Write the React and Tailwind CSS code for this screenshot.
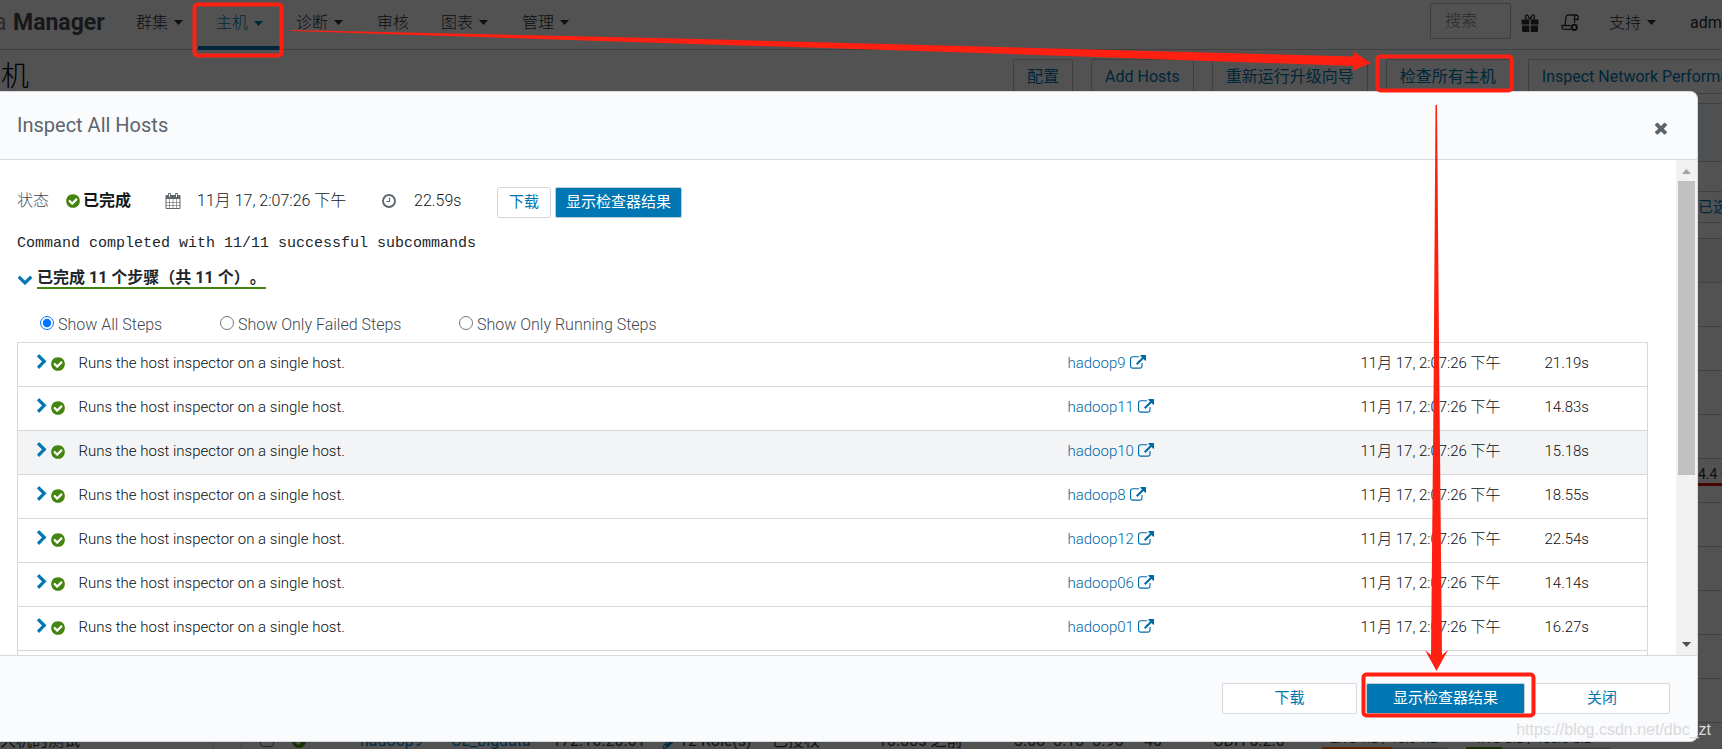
import React from "react";
import { FaPencilAlt } from "react-icons/fa";

const baseFont = "font-['Roboto','Noto_Sans_CJK_SC',sans-serif]";

function Caret({ className = "" }) {
  return (
    <svg className={`h-[5px] w-[9px] ${className}`} viewBox="0 0 8 4" fill="currentColor" preserveAspectRatio="none" aria-hidden="true">
      <path d="M0 0h8L4 4z" />
    </svg>
  );
}

function Glyph({ d, className }) {
  return (
    <svg className={className} viewBox="0 0 1792 1792" fill="currentColor" aria-hidden="true">
      <path d={d} />
    </svg>
  );
}

const glyphs = {
  external:
    "M1408 928v320q0 119-84.500 203.500t-203.500 84.500h-832q-119 0-203.500-84.500t-84.500-203.500v-832q0-119 84.500-203.500t203.500-84.500h704q14 0 23 9t9 23v64q0 14-9 23t-23 9h-704q-66 0-113 47t-47 113v832q0 66 47 113t113 47h832q66 0 113-47t47-113v-320q0-14 9-23t23-9h64q14 0 23 9t9 23zm384-864v512q0 26-19 45t-45 19-45-19l-176-176-652 652q-10 10-23 10t-23-10l-114-114q-10-10-10-23t10-23l652-652-176-176q-19-19-19-45t19-45 45-19h512q26 0 45 19t19 45z",
  right:
    "M1363 877l-742 742q-19 19-45 19t-45-19l-166-166q-19-19-19-45t19-45l531-531-531-531q-19-19-19-45t19-45l166-166q19-19 45-19t45 19l742 742q19 19 19 45t-19 45z",
  down:
    "M1683 808l-742 741q-19 19-45 19t-45-19l-742-741q-19-19-19-45.500t19-45.500l166-165q19-19 45-19t45 19l531 531 531-531q19-19 45-19t45 19l166 165q19 19 19 45.500t-19 45.500z",
  check:
    "M1412 734q0-28-18-46l-91-90q-19-19-45-19t-45 19l-408 407-226-226q-19-19-45-19t-45 19l-91 90q-18 18-18 46 0 27 18 45l362 362q19 19 45 19 27 0 46-19l543-543q18-18 18-45zm252 162q0 209-103 385.500t-279.500 279.500-385.500 103-385.500-103-279.500-279.500-103-385.500 103-385.500 279.500-279.500 385.500-103 385.500 103 279.500 279.500 103 385.500z",
  times:
    "M1490 1322q0 40-28 68l-136 136q-28 28-68 28t-68-28l-294-294-294 294q-28 28-68 28t-68-28l-136-136q-28-28-28-68t28-68l294-294-294-294q-28-28-28-68t28-68l136-136q28-28 68-28t68 28l294 294 294-294q28-28 68-28t68 28l136 136q28 28 28 68t-28 68l-294 294 294 294q28 28 28 68z",
};

function CheckIcon({ className = "" }) {
  return <Glyph d={glyphs.check} className={`h-4 w-4 shrink-0 ${className}`} />;
}

function GiftIcon() {
  return (
    <svg className="h-[18px] w-[18px]" viewBox="0 0 18 18" aria-hidden="true">
      <path fill="currentColor" d="M1 5.500h7.300v5H.5V6zM9.700 5.500H17l.5.500v4.500H9.700zM1 11.500h7.300V18H2l-1-1zM9.700 11.500H17V17l-1 1H9.700z" />
      <path fill="none" stroke="currentColor" strokeWidth="1.300" d="M8.600 5.500C8 2.500 6.500.7 5.300 1 3.700 1.500 4.500 4.500 6 5.500M9.400 5.500C10 2.500 11.500.7 12.700 1c1.600.5.8 3.500-.7 4.500" />
    </svg>
  );
}

function ScriptIcon() {
  return (
    <svg className="h-[18px] w-[18px]" viewBox="0 0 18 18" fill="none" stroke="currentColor" strokeWidth="1.300" aria-hidden="true">
      <path d="M4 11.500L5 3a2.300 2.300 0 0 1 2.300-2H15.500A1.700 1.700 0 0 1 17 3v2.500h-3.500M15.500 1A2.300 2.300 0 0 0 13.500 3v6M9.500 11.500H1v2A1.800 1.800 0 0 0 2.700 15.300H10" />
      <circle cx="13.300" cy="13.300" r="2.600" strokeWidth="2" />
    </svg>
  );
}

function CalendarIcon() {
  return (
    <svg className="h-4 w-4" viewBox="0 0 16 16" fill="none" stroke="currentColor" aria-hidden="true">
      <path d="M1 2.500h14v13H1z" />
      <path d="M1 2.500h14V6H1z" fill="currentColor" stroke="none" />
      <path d="M1 9.500h14M1 12.500h14M4.500 6v9M8 6v9M11.500 6v9" strokeWidth=".6" />
      <path d="M4.500 0v4M11.500 0v4" strokeWidth="2.600" />
      <path d="M4.500 1v3M11.500 1v3" stroke="#fff" strokeWidth=".9" />
    </svg>
  );
}

function ClockIcon() {
  return (
    <svg className="h-[14px] w-[14px]" viewBox="0 0 14 14" fill="none" stroke="currentColor" aria-hidden="true">
      <circle cx="7" cy="7" r="6" strokeWidth="1.900" />
      <path d="M7.500 3.500v4h-3" strokeWidth="1.200" />
    </svg>
  );
}

const navItems = [
  { label: "群集", caret: true },
  { label: "主机", caret: true, active: true },
  { label: "诊断", caret: true },
  { label: "审核" },
  { label: "图表", caret: true },
  { label: "管理", caret: true },
];

const actions = ["配置", "Add Hosts", "重新运行升级向导", "检查所有主机", "Inspect Network Performance"];

const steps = [
  ["hadoop9", "21.19s"],
  ["hadoop11", "14.83s"],
  ["hadoop10", "15.18s"],
  ["hadoop8", "18.55s"],
  ["hadoop12", "22.54s"],
  ["hadoop06", "14.14s"],
  ["hadoop01", "16.27s"],
  ["hadoop7", "15.02s"],
];

function TopBar() {
  return (
    <header className="flex h-[50px] shrink-0 items-stretch border-b border-[#c8c8c8] text-[#2a3036]">
      <div className="flex w-[120px] shrink-0 items-center pb-[2px] text-[23px] whitespace-nowrap">
        <span className="ml-[-6px] w-[19px] text-[#888]">a</span>
        <b className="font-bold text-[#444c52]">Manager</b>
      </div>
      <nav className="flex flex-1 font-light">
        {navItems.map((n) => (
          <a
            key={n.label}
            href="#"
            className={
              n.active
                ? "-mb-px -ml-[3px] flex items-center gap-[6px] border-b-4 border-[#0077b3] pr-[15px] pl-[18px] text-[#0077b3]"
                : "flex items-center gap-[6px] px-4 pb-1"
            }
          >
            {n.label}
            {n.caret && <Caret className="mr-[2px]" />}
          </a>
        ))}
      </nav>
      <div className="flex items-center whitespace-nowrap">
        <input aria-label="搜索" placeholder="搜索" className="mb-2 h-9 w-[81px] rounded-[2px] border border-[#bbb] px-[14px] font-light placeholder:text-[#888]" />
        <span className="mb-1 ml-[10px]"><GiftIcon /></span>
        <span className="mb-1 ml-[22px]"><ScriptIcon /></span>
        <a href="#" className="mb-1 ml-[30px] flex items-center gap-[6px] font-light">支持<Caret /></a>
        <a href="#" className="mb-1 ml-[34px] w-8 overflow-hidden">admin</a>
      </div>
    </header>
  );
}

function BackgroundPage() {
  return (
    <div className="flex h-full flex-col overflow-hidden bg-white text-[16px]">
      <TopBar />
      <div className="flex h-[53px] shrink-0 items-start justify-between">
        <h1 className="ml-[-27px] pt-1 text-[28px] leading-[46px] font-light text-black">主机</h1>
        <div className="mt-[9px] flex w-[709px] shrink-0 gap-[18px] overflow-hidden">
          {actions.map((a) => (
            <button key={a} className="h-[35px] shrink-0 rounded-[2px] border border-[#c4c4c4] px-[13px] text-[#0077b3]">
              {a}
            </button>
          ))}
        </div>
      </div>
      <div className="flex min-h-0 flex-1 flex-col items-end overflow-hidden border-t border-[#c8c8c8]">
        <div className="h-[58px] w-full shrink-0 border-b border-[#c8c8c8] bg-[#f5f7fa]" />
        <div className="h-[30px] w-full shrink-0 border-b border-[#c8c8c8]" />
        <div className="flex h-[31px] w-full shrink-0 items-center justify-end border-b border-[#c8c8c8] text-[15px] text-[#0077b3]">
          <span className="w-6 overflow-hidden whitespace-nowrap">已选</span>
        </div>
        <div className="h-4 w-full shrink-0 border-b border-[#c8c8c8]" />
        <div className="h-11 w-full shrink-0 border-b border-[#c8c8c8] bg-[#f2f5f2]" />
        {[0, 1, 2, 3, 4, 5, 6, 7, 8, 9].map((i) => (
          <div key={i} className="flex h-11 w-full shrink-0 justify-end border-b border-[#c8c8c8] text-[14px] leading-6">
            {i === 4 && <span className="mt-[3px] h-6 w-6 overflow-hidden border-b-3 border-[#d81000] whitespace-nowrap text-[#333]">4.4 G</span>}
          </div>
        ))}
      </div>
    </div>
  );
}

function Meter({ className, fill, rest, text }) {
  return (
    <span className={`flex shrink-0 flex-col ${className}`}>
      <span className="pl-2">{text}</span>
      <span className="flex h-[2px]">
        <span className={fill} />
        <span className={rest} />
      </span>
    </span>
  );
}

function BackgroundRow() {
  return (
    <div className="flex h-[7px] items-end overflow-hidden text-[16px] leading-4 whitespace-nowrap text-[#111]">
      <span className="w-[213px] shrink-0">大机的测试</span>
      <span className="w-7 shrink-0 self-stretch border-l border-[#444]" />
      <span className="w-[19px] shrink-0 self-stretch border-l border-[#444]" />
      <input type="checkbox" aria-label="hadoop9" className="mr-[17px] mb-[2px] h-[14px] w-[14px] shrink-0 appearance-none rounded-[3px] border border-[#222]" />
      <CheckIcon className="mr-[53px] text-[#173000]" />
      <span className="w-[91px] shrink-0 text-[#002b42]">hadoop9</span>
      <span className="w-[101px] shrink-0 text-[#002b42]">CL_bigdata</span>
      <span className="w-[111px] shrink-0">172.16.20.61</span>
      <FaPencilAlt className="mr-[2px] h-[14px] w-[14px] shrink-0 text-[#002b42]" />
      <span className="w-[93px] shrink-0">12 Role(s)</span>
      <span className="w-[106px] shrink-0">已授权</span>
      <span className="w-[136px] shrink-0">13.33s 之前</span>
      <span className="w-[130px] shrink-0">3.08&nbsp; 3.13&nbsp; 3.96</span>
      <span className="w-[69px] shrink-0">40</span>
      <span className="w-[109px] shrink-0">CDH 6.2.0</span>
      <Meter className="mr-[18px] w-[126px] text-[13px]" fill="w-[70px] bg-[#582500]" rest="flex-1 bg-[#444]" text="2.1G TiB / 13.6 TiB" />
      <Meter className="w-[145px] text-[13px]" fill="w-9 bg-[#173000]" rest="flex-1 bg-[#444]" text="4.1G GiB / 188.6 GiB" />
    </div>
  );
}

function StatusRow() {
  return (
    <div className="flex h-[31px] items-center text-[16px] text-[#12171b]">
      <span className="w-12 pb-1 font-light text-[#444c52]">状态</span>
      <CheckIcon className="mb-[3px] text-[#43850f]" />
      <b className="ml-[2px] w-[82px] pb-1 font-bold">已完成</b>
      <span className="w-8 pb-1 text-[#5f676d]"><CalendarIcon /></span>
      <span className="w-[185px] pb-1 font-light">11月 17, 2:07:26 下午</span>
      <span className="w-8 pb-1 text-[#5f676d]"><ClockIcon /></span>
      <span className="w-[83px] pb-1 font-light">22.59s</span>
      <button className="h-[31px] rounded-[2px] border border-[#d5d8db] px-[11px] text-[15px] text-[#0077b3]">下载</button>
      <button className="ml-1 h-[31px] rounded-[2px] border border-[#c0ccd4] bg-[#0077b3] px-[10px] text-[15px] text-white">显示检查器结果</button>
    </div>
  );
}

function Filter({ id, label, width, checked }) {
  return (
    <div className={`flex items-center ${width}`}>
      <input type="radio" name="filter" id={id} defaultChecked={checked} className="mr-1 mb-1 h-[14px] w-[14px]" />
      <label htmlFor={id}>{label}</label>
    </div>
  );
}

function StepsTable() {
  return (
    <table className="w-full table-fixed border-collapse border border-[#d5d8dc] text-left text-[15px] font-light text-[#0a0e12]">
      <colgroup>
        <col className="w-[61px]" />
        <col />
        <col className="w-[293px]" />
        <col className="w-[184px]" />
        <col className="w-[103px]" />
      </colgroup>
      <tbody>
        {steps.map(([host, time], i) => (
          <tr key={host} className={`h-11 border-b border-[#d5d8dc] ${i === 2 ? "bg-[#f3f4f6]" : "bg-white"}`}>
            <td className="pb-[3px] pl-4">
              <span className="flex items-center">
                <Glyph d={glyphs.right} className="mb-[2px] h-4 w-4 text-[#0077b3]" />
                <CheckIcon className="mt-[2px] text-[#43850f]" />
              </span>
            </td>
            <td className="pb-[3px]">Runs the host inspector on a single host.</td>
            <td className="pb-[3px]">
              <a href="#" className="flex items-center gap-1 text-[#0069a6]">{host}<Glyph d={glyphs.external} className="h-4 w-4" /></a>
            </td>
            <td className="pb-[3px]">11月 17, 2:07:26 下午</td>
            <td className="pb-[3px]">{time}</td>
          </tr>
        ))}
      </tbody>
    </table>
  );
}

function ScrollBar() {
  return (
    <div className="flex w-[21px] shrink-0 flex-col items-center bg-[#f1f1f1] py-2 text-[#505050]">
      <Caret className="my-[1px] rotate-180 text-[#a3a3a3]" />
      <div className="mt-[6px] h-[294px] w-[17px] bg-[#c1c1c1]" />
      <Caret className="mt-auto" />
    </div>
  );
}

function Dialog() {
  return (
    <section role="dialog" aria-label="Inspect All Hosts" className="mr-6 flex min-h-0 flex-1 flex-col overflow-hidden rounded-r-lg border-y border-r border-[#d5d8dc] bg-white">
      <header className="flex h-[68px] shrink-0 items-center justify-between border-b border-[#d5d8dc] bg-[#fafbfd] pr-[27px] pl-[17px] text-[#5a656d]">
        <h2 className="pb-[2px] text-[20px]">Inspect All Hosts</h2>
        <button aria-label="Close" className="pt-1"><Glyph d={glyphs.times} className="h-[18px] w-[18px]" /></button>
      </header>
      <div className="flex min-h-0 flex-1">
        <div className="min-w-0 flex-1 overflow-hidden pt-[27px] pr-7 pl-[17px]">
          <StatusRow />
          <p className="mt-[14px] font-['Liberation_Mono',monospace] text-[15px] leading-6 text-[#20262b]">Command completed with 11/11 successful subcommands</p>
          <div className="mt-[13px] flex h-5 items-center gap-1 text-[16px]">
            <Glyph d={glyphs.down} className="h-4 w-4 text-[#0077b3]" />
            <b className="border-b-2 border-[#43850f] leading-[18px] font-bold text-[#20262b] [text-spacing-trim:space-all]">已完成 11 个步骤（共 11 个）。</b>
          </div>
          <fieldset className="mt-6 flex h-6 pl-[23px] text-[16px] font-light text-[#3f474d]">
            <Filter id="all" label="Show All Steps" width="w-[180px]" checked />
            <Filter id="failed" label="Show Only Failed Steps" width="w-[239px]" />
            <Filter id="running" label="Show Only Running Steps" width="w-[239px]" />
          </fieldset>
          <div className="pt-[5px]">
            <StepsTable />
          </div>
        </div>
        <ScrollBar />
      </div>
      <footer className="flex h-[86px] shrink-0 items-center justify-end gap-[9px] border-t border-[#d5d8dc] bg-[#fafbfd] pr-[27px] text-[15px] text-[#0077b3]">
        <button className="h-[31px] w-[135px] rounded-[2px] border border-[#d5d8dc] bg-white">下载</button>
        <button className="h-[31px] w-[159px] rounded-[2px] border border-[#c0ccd4] bg-[#0077b3] text-white">显示检查器结果</button>
        <button className="h-[31px] w-[136px] rounded-[2px] border border-[#d5d8dc] bg-white">关闭</button>
      </footer>
    </section>
  );
}

function Annotations() {
  return (
    <svg className="pointer-events-none absolute top-0 left-0 h-[749px] w-[1722px]" viewBox="0 0 1722 749" aria-hidden="true">
      <g fill="none" stroke="#ff2012" strokeWidth="4">
        <rect x="194.500" y="4.500" width="87" height="51" rx="3" />
        <rect x="1377.500" y="56.500" width="134" height="34" rx="3" />
        <rect x="1363.500" y="674.500" width="170" height="41" rx="3" />
      </g>
      <g fill="#ff2012">
        <path d="M291 30L700 39L1354 56.500V52L1371 63L1352 71L1354 66L980 53L600 41L291 31z" />
        <path d="M1435.500 105h1.500L1439.500 400L1442 655L1448 650L1436.500 671L1425 650L1431 655L1433.500 400z" />
      </g>
    </svg>
  );
}

export default function App() {
  return (
    <div className={`relative h-screen overflow-hidden ${baseFont}`}>
      <BackgroundPage />
      <div className="absolute inset-0 flex flex-col bg-black/68 pt-[91px]">
        <Dialog />
        <BackgroundRow />
      </div>
      <Annotations />
      <span className="absolute right-[11px] bottom-[9px] font-['Liberation_Sans',sans-serif] text-[16px] leading-5 text-[#d9dadc]">
        https://blog.csdn.net/dbc_zt
      </span>
    </div>
  );
}
